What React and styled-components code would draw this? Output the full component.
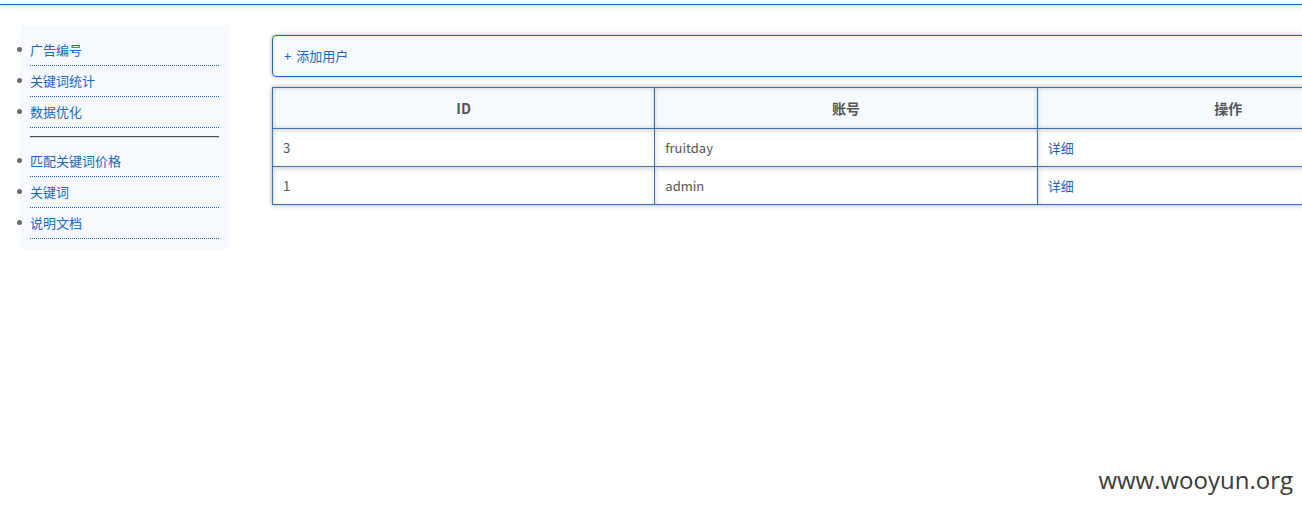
import React from "react";
import styled, { createGlobalStyle } from "styled-components";

const Global = createGlobalStyle`
  html, body { margin: 0; padding: 0; overflow: hidden; background: #fff; }
  body { font-family: "Noto Sans CJK SC", "Noto Sans", sans-serif; font-size: 13px; color: #555; }
`;

const Page = styled.div`
  width: 1302px;
  height: 510px;
  position: relative;
  overflow: hidden;
`;

const TopBar = styled.div`
  height: 4px;
  border-bottom: 1px solid #1a66c0;
  box-shadow: 0 2px 4px rgba(0, 0, 0, 0.12);
`;

const Body = styled.div`
  display: flex;
  align-items: flex-start;
  padding: 20px 0 0 20px;
  gap: 43px;
`;

const Sidebar = styled.div`
  flex: none;
  width: 209px;
  background: #f6faff;
  padding: 10px 0;
`;

const Menu = styled.ul`
  margin: 0;
  padding: 0 10px 0 10px;
  list-style: none;
`;

const Item = styled.li`
  position: relative;
  height: 30px;
  line-height: 29px;
  border-bottom: 1px dotted #1a66b8;
  font-size: 13px;
  &::before {
    content: "";
    position: absolute;
    left: -13px;
    top: 12px;
    width: 5px;
    height: 5px;
    border-radius: 50%;
    background: #6a6a6a;
  }
`;

const MenuLink = styled.a`
  color: #1a66b8;
  text-decoration: none;
`;

const Separator = styled.div`
  margin: 8px 10px 8px 10px;
  height: 0;
  border-top: 1px solid #4a4a4a;
  border-bottom: 1px solid #d8d8d8;
`;

const Main = styled.div`
  flex: none;
  width: 1148px;
  margin-top: 10px;
  display: flex;
  flex-direction: column;
  gap: 10px;
`;

const AddBar = styled.div`
  height: 40px;
  line-height: 40px;
  border: 1px solid #1a66b8;
  border-radius: 4px;
  background: #f6faff;
  box-shadow: 0 0 4px rgba(0, 0, 0, 0.3);
  padding-left: 11px;
`;

const AddLink = styled.a`
  color: #1a66b8;
  text-decoration: none;
  font-size: 13px;
  word-spacing: 2px;
`;

const Table = styled.table`
  width: 1148px;
  border-collapse: collapse;
  table-layout: fixed;
  box-shadow: 0 0 5px rgba(0, 0, 0, 0.35);
  border: 1px solid #2f6fb0;
`;

const Th = styled.th`
  height: 40px;
  border: 1px solid #3a74b0;
  background: #f6faff;
  color: #555;
  font-size: 14px;
  font-weight: bold;
  text-align: center;
  box-shadow: inset 0 0 4px rgba(0, 0, 0, 0.2);
  padding: 0;
`;

const Td = styled.td`
  height: 37px;
  border: 1px solid #3a74b0;
  background: #fff;
  color: #555;
  font-size: 13px;
  padding: 0 0 0 10px;
  box-shadow: inset 1px 2px 4px rgba(0, 0, 0, 0.16);
`;

const DetailLink = styled.a`
  color: #1a66b8;
  text-decoration: none;
`;

const Watermark = styled.div`
  position: absolute;
  right: 9px;
  top: 465px;
  font-family: "Open Sans", "Noto Sans", sans-serif;
  font-size: 24px;
  line-height: 30px;
  color: #3a3a3a;
`;

const groups = [
  ["广告编号", "关键词统计", "数据优化"],
  ["匹配关键词价格", "关键词", "说明文档"],
];

const rows = [
  { id: "3", name: "fruitday" },
  { id: "1", name: "admin" },
];

export default function App() {
  return (
    <Page>
      <Global />
      <TopBar />
      <Body>
        <Sidebar>
          <Menu>
            {groups[0].map((t) => (
              <Item key={t}>
                <MenuLink href="#">{t}</MenuLink>
              </Item>
            ))}
          </Menu>
          <Separator />
          <Menu>
            {groups[1].map((t) => (
              <Item key={t}>
                <MenuLink href="#">{t}</MenuLink>
              </Item>
            ))}
          </Menu>
        </Sidebar>
        <Main>
          <AddBar>
            <AddLink href="#">+ 添加用户</AddLink>
          </AddBar>
          <Table>
            <thead>
              <tr>
                <Th>ID</Th>
                <Th>账号</Th>
                <Th>操作</Th>
              </tr>
            </thead>
            <tbody>
              {rows.map((r) => (
                <tr key={r.id}>
                  <Td>{r.id}</Td>
                  <Td>{r.name}</Td>
                  <Td>
                    <DetailLink href="#">详细</DetailLink>
                  </Td>
                </tr>
              ))}
            </tbody>
          </Table>
        </Main>
      </Body>
      <Watermark>www.wooyun.org</Watermark>
    </Page>
  );
}
